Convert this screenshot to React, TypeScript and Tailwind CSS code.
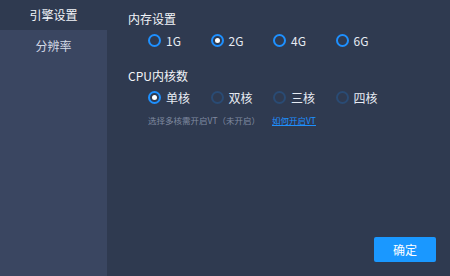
import { useState } from "react"

const font = { fontFamily: '"Noto Sans CJK SC", "Noto Sans", sans-serif' }

const memOptions = ["1G", "2G", "4G", "6G"]
const cpuOptions = ["单核", "双核", "三核", "四核"]

function Radio({ label, checked, disabled, onClick }: { label: string; checked: boolean; disabled?: boolean; onClick?: () => void }) {
  return (
    <button onClick={onClick} className="flex items-center gap-[5px] w-[62.5px] text-left">
      <span
        className={`w-[13px] h-[13px] rounded-full border-2 flex items-center justify-center shrink-0 ${
          disabled ? "border-[#2a4b74]" : "border-[#1e90ff]"
        }`}
      >
        {checked && <span className="w-[5px] h-[5px] rounded-full bg-white" />}
      </span>
      <span className="text-[12px] leading-none text-[#e6ebf3]">{label}</span>
    </button>
  )
}

export default function App() {
  const [mem, setMem] = useState("2G")
  const [cpu, setCpu] = useState("单核")

  return (
    <div style={font} className="w-[450px] h-[276px] flex bg-[#2f3a50] overflow-hidden">
      {/* Sidebar */}
      <div className="w-[107px] flex flex-col">
        <div className="h-[30px] flex items-center justify-center text-[12px] text-[#f2f4f8] bg-[#2f3a50]">引擎设置</div>
        <div className="flex-1 bg-[#3a4661]">
          <div className="h-[32px] flex items-center justify-center text-[12px] text-[#d4dae6]">分辨率</div>
        </div>
      </div>

      {/* Main */}
      <div className="flex-1 flex flex-col pl-[21px] pt-[10px] pr-[14px] pb-[14px]">
        <div className="text-[12px] text-[#f2f4f8] leading-[18px]">内存设置</div>
        <div className="flex pl-[20px] mt-[6px]">
          {memOptions.map((m) => (
            <Radio key={m} label={m} checked={mem === m} onClick={() => setMem(m)} />
          ))}
        </div>

        <div className="text-[12px] text-[#f2f4f8] leading-[18px] mt-[20px]">CPU内核数</div>
        <div className="flex pl-[20px] mt-[6px]">
          {cpuOptions.map((c) => (
            <Radio key={c} label={c} checked={cpu === c} disabled={c !== "单核"} onClick={() => setCpu(c)} />
          ))}
        </div>
        <div className="flex items-center pl-[20px] mt-[12px] text-[8.5px] leading-none">
          <span className="text-[#7f8aa0]">选择多核需开启VT（未开启）</span>
          <a className="ml-[12px] text-[#1e90ff] underline">如何开启VT</a>
        </div>

        <div className="flex-1" />
        <div className="flex justify-end">
          <button className="w-[62px] h-[25px] bg-[#1a98ff] text-white text-[12px] rounded-[2px]">确定</button>
        </div>
      </div>
    </div>
  )
}
